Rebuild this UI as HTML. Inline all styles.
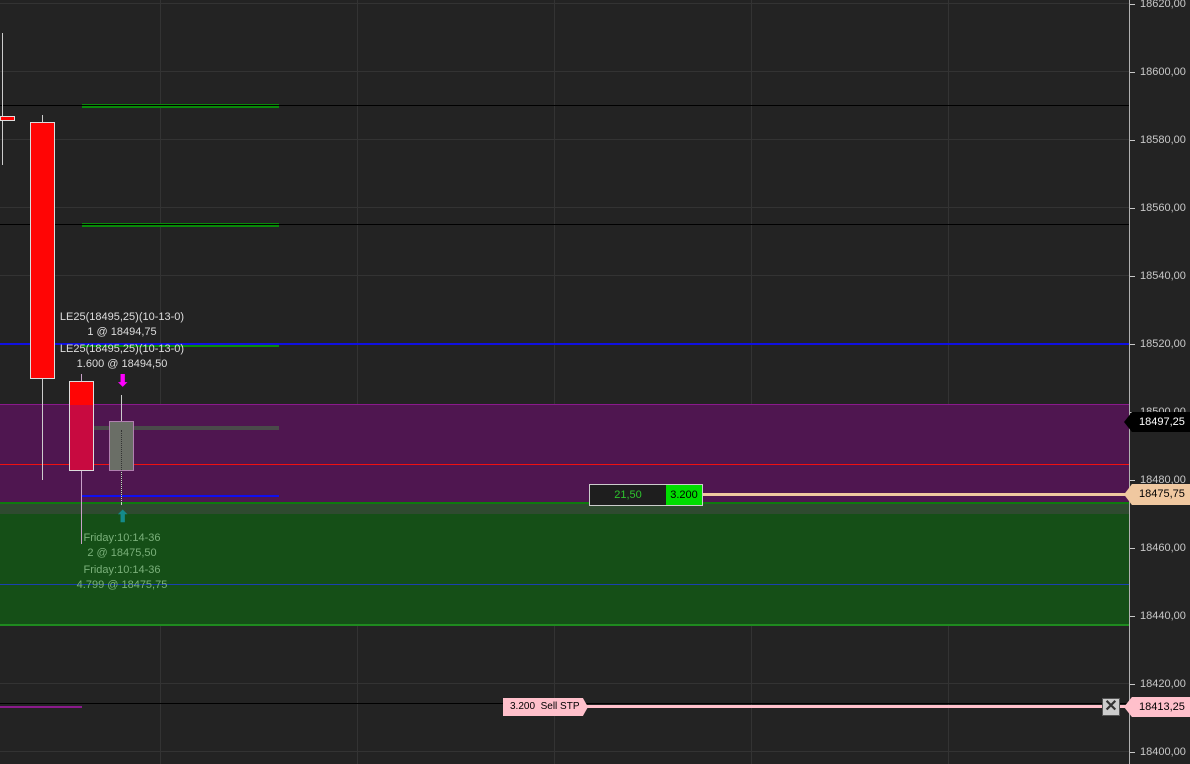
<!DOCTYPE html>
<html><head><meta charset="utf-8"><style>
body{margin:0;width:1190px;height:764px;background:#232323;overflow:hidden;position:relative;font-family:"Liberation Sans",sans-serif}
div{position:absolute;box-sizing:border-box}
.h{height:1px}
.gl{background:#333}
.lbl{left:1140px;font-size:11px;color:#c8c8c8;line-height:12px;white-space:nowrap}
.tk{left:1130px;width:5px;height:1px;background:#c8c8c8}
.t{font-size:11px;color:#ddd;text-align:center;line-height:15px;white-space:nowrap}
</style></head><body>
<div class="gl" style="left:160px;top:0;width:1px;height:764px"></div>
<div class="gl" style="left:357px;top:0;width:1px;height:764px"></div>
<div class="gl" style="left:554px;top:0;width:1px;height:764px"></div>
<div class="gl" style="left:751px;top:0;width:1px;height:764px"></div>
<div class="gl" style="left:948px;top:0;width:1px;height:764px"></div>
<div class="gl h" style="left:0;top:3px;width:1129px"></div>
<div class="gl h" style="left:0;top:71px;width:1129px"></div>
<div class="gl h" style="left:0;top:139px;width:1129px"></div>
<div class="gl h" style="left:0;top:207px;width:1129px"></div>
<div class="gl h" style="left:0;top:275px;width:1129px"></div>
<div class="gl h" style="left:0;top:343px;width:1129px"></div>
<div class="gl h" style="left:0;top:411px;width:1129px"></div>
<div class="gl h" style="left:0;top:479px;width:1129px"></div>
<div class="gl h" style="left:0;top:547px;width:1129px"></div>
<div class="gl h" style="left:0;top:615px;width:1129px"></div>
<div class="gl h" style="left:0;top:683px;width:1129px"></div>
<div class="gl h" style="left:0;top:751px;width:1129px"></div>
<div style="left:0;top:404px;width:1129px;height:98px;background:#4f1650;border-top:1px solid #8a1a8c"></div>
<div style="left:0;top:502px;width:1129px;height:12px;background:#2f4a30;border-top:2px solid #0f7a0f"></div>
<div style="left:0;top:514px;width:1129px;height:112px;background:#154f17;border-bottom:2px solid #1f8a1f"></div>
<div class="h" style="left:0;top:105px;width:1129px;background:#000"></div>
<div class="h" style="left:0;top:224px;width:1129px;background:#000"></div>
<div style="left:82px;top:104px;width:197px;height:4px;border-top:1px solid #0a8a0a;border-bottom:2px solid #0a8a0a"></div>
<div style="left:82px;top:223px;width:197px;height:4px;border-top:1px solid #0a8a0a;border-bottom:2px solid #0a8a0a"></div>
<div style="left:82px;top:343px;width:197px;height:4px;border-bottom:2px solid #0a8a0a"></div>
<div style="left:0;top:343px;width:1129px;height:2px;background:#1010e0"></div>
<div class="h" style="left:0;top:464px;width:1129px;background:#f01010"></div>
<div class="h" style="left:0;top:584px;width:1129px;background:#1a40b0"></div>
<div style="left:82px;top:495px;width:197px;height:2px;background:#1010f0"></div>
<div style="left:82px;top:426px;width:197px;height:4px;background:#4a4a4a"></div>
<div class="h" style="left:0;top:703px;width:1129px;background:#000"></div>
<div style="left:0;top:706px;width:82px;height:2px;background:#8a1a8c"></div>
<div style="left:2px;top:33px;width:1px;height:132px;background:#ccc"></div>
<div style="left:0;top:116px;width:15px;height:5px;background:#f00;border:1px solid #ddd"></div>
<div style="left:42px;top:115px;width:1px;height:365px;background:#ccc"></div>
<div style="left:30px;top:122px;width:25px;height:257px;background:#ff0505;border:1px solid #ddd"></div>
<div style="left:81px;top:374px;width:1px;height:170px;background:#c8a0c8"></div>
<div style="left:69px;top:381px;width:25px;height:90px;background:#c80a40;border:1px solid #ddd"></div>
<div style="left:69px;top:381px;width:25px;height:24px;background:#ff0505;border:1px solid #ddd;border-bottom:none"></div>
<div style="left:121px;top:395px;width:1px;height:110px;background:#ccc"></div>
<div style="left:109px;top:421px;width:25px;height:50px;background:#6a6e66;border:1px solid #b080b0"></div>
<div style="left:121px;top:430px;width:0;height:72px;border-left:1px dotted #333"></div>
<div style="left:116px;top:374px;font-size:16px;color:#ff00ff;line-height:16px;font-weight:bold">⬇</div>
<div style="left:116px;top:510px;font-size:16px;color:#148a8a;line-height:16px;font-weight:bold">⬆</div>
<div class="t" style="left:52px;top:310px;width:140px">LE25(18495,25)(10-13-0)<br>1 @ 18494,75</div>
<div class="t" style="left:52px;top:342px;width:140px">LE25(18495,25)(10-13-0)<br>1.600 @ 18494,50</div>
<div class="t" style="left:52px;top:531px;width:140px;color:#7ab07a">Friday:10:14-36<br>2 @ 18475,50</div>
<div class="t" style="left:52px;top:563px;width:140px;color:#7ab07a">Friday:10:14-36<br>4.799 @ 18475,75</div>
<div style="left:703px;top:493px;width:426px;height:3px;background:#f0c8a0"></div>
<div style="left:589px;top:484px;width:114px;height:22px;border:1px solid #ccc;background:#1e1e1e"></div>
<div style="left:590px;top:485px;width:76px;height:20px;color:#2ec42e;font-size:11px;line-height:20px;text-align:center">21,50</div>
<div style="left:666px;top:485px;width:36px;height:20px;background:#00dd00;color:#000;font-size:11px;line-height:20px;text-align:center">3.200</div>
<div style="left:585px;top:705px;width:544px;height:3px;background:#ffc0cb"></div>
<div style="left:503px;top:698px;width:85px;height:18px;background:#ffc0cb;color:#000;font-size:10px;line-height:18px;padding-left:7px;white-space:nowrap;clip-path:polygon(0 0,94% 0,100% 50%,94% 100%,0 100%)">3.200&nbsp; Sell STP</div>
<div style="left:1102px;top:698px;width:18px;height:18px;background:#ccc;border:1px solid #555;color:#333;font-size:16px;line-height:16px;text-align:center;font-weight:bold">✕</div>
<div style="left:1129px;top:0;width:1px;height:764px;background:#b0b0b0"></div>
<div class="tk" style="top:4px"></div><div class="lbl" style="top:-2px">18620,00</div>
<div class="tk" style="top:72px"></div><div class="lbl" style="top:66px">18600,00</div>
<div class="tk" style="top:140px"></div><div class="lbl" style="top:134px">18580,00</div>
<div class="tk" style="top:208px"></div><div class="lbl" style="top:202px">18560,00</div>
<div class="tk" style="top:276px"></div><div class="lbl" style="top:270px">18540,00</div>
<div class="tk" style="top:344px"></div><div class="lbl" style="top:338px">18520,00</div>
<div class="tk" style="top:412px"></div><div class="lbl" style="top:406px">18500,00</div>
<div class="tk" style="top:480px"></div><div class="lbl" style="top:474px">18480,00</div>
<div class="tk" style="top:548px"></div><div class="lbl" style="top:542px">18460,00</div>
<div class="tk" style="top:616px"></div><div class="lbl" style="top:610px">18440,00</div>
<div class="tk" style="top:684px"></div><div class="lbl" style="top:678px">18420,00</div>
<div class="tk" style="top:752px"></div><div class="lbl" style="top:746px">18400,00</div>
<div style="left:1124px;top:412px;width:66px;height:20px;background:#000;color:#fff;font-size:11px;line-height:20px;padding-left:15px;white-space:nowrap;clip-path:polygon(0 50%,12% 0,100% 0,100% 100%,12% 100%)">18497,25</div>
<div style="left:1124px;top:484px;width:66px;height:21px;background:#f0c8a0;color:#000;font-size:11px;line-height:21px;padding-left:15px;white-space:nowrap;clip-path:polygon(0 50%,12% 0,100% 0,100% 100%,12% 100%)">18475,75</div>
<div style="left:1124px;top:697px;width:66px;height:20px;background:#ffc0cb;color:#000;font-size:11px;line-height:20px;padding-left:15px;white-space:nowrap;clip-path:polygon(0 50%,12% 0,100% 0,100% 100%,12% 100%)">18413,25</div>
</body></html>
